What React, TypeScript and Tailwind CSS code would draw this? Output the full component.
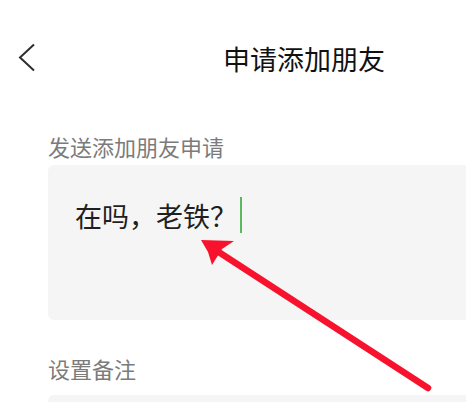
const cjk = { fontFamily: '"Noto Sans CJK SC", "Noto Sans", sans-serif' }

export default function App() {
  return (
    <div className="relative w-[466px] h-[402px] overflow-hidden bg-white" style={cjk}>
      {/* Header */}
      <div className="flex items-center h-[44px] mt-[36px] pl-[18px]">
        <svg width="18" height="30" viewBox="0 0 18 30" className="text-[#2e2e2e]">
          <polyline points="16,1.5 2,14.5 16,27.5" fill="none" stroke="currentColor" strokeWidth="2" strokeLinejoin="miter" />
        </svg>
        <h1 className="ml-[187px] text-[27px] leading-none font-normal text-[#111]">申请添加朋友</h1>
      </div>

      {/* Request message */}
      <div className="pl-[48px] mt-[55px]">
        <p className="text-[22px] leading-none text-[#7b7b7b]">发送添加朋友申请</p>
        <div className="mt-[8px] h-[155px] rounded-l-md bg-[#f5f5f5] pl-[27px] pt-[32px]">
          <div className="flex items-center">
            <span className="text-[27px] leading-none text-[#1f1f1f]">在吗，老铁？</span>
            <span className="ml-[3px] w-[2px] h-[36px] bg-[#5cb85c]" />
          </div>
        </div>

        <p className="mt-[37px] text-[22px] leading-none text-[#7b7b7b]">设置备注</p>
        <div className="mt-[16px] h-[40px] rounded-l-md bg-[#f5f5f5]" />
      </div>

      {/* Annotation arrow */}
      <svg className="absolute inset-0 pointer-events-none" width="466" height="402" viewBox="0 0 466 402">
        <line x1="428" y1="388" x2="214" y2="249" stroke="#f7132d" strokeWidth="6.5" strokeLinecap="round" />
        <polygon points="201,240 234,241 222,249 212,265 208,252" fill="#f7132d" />
      </svg>
    </div>
  )
}
